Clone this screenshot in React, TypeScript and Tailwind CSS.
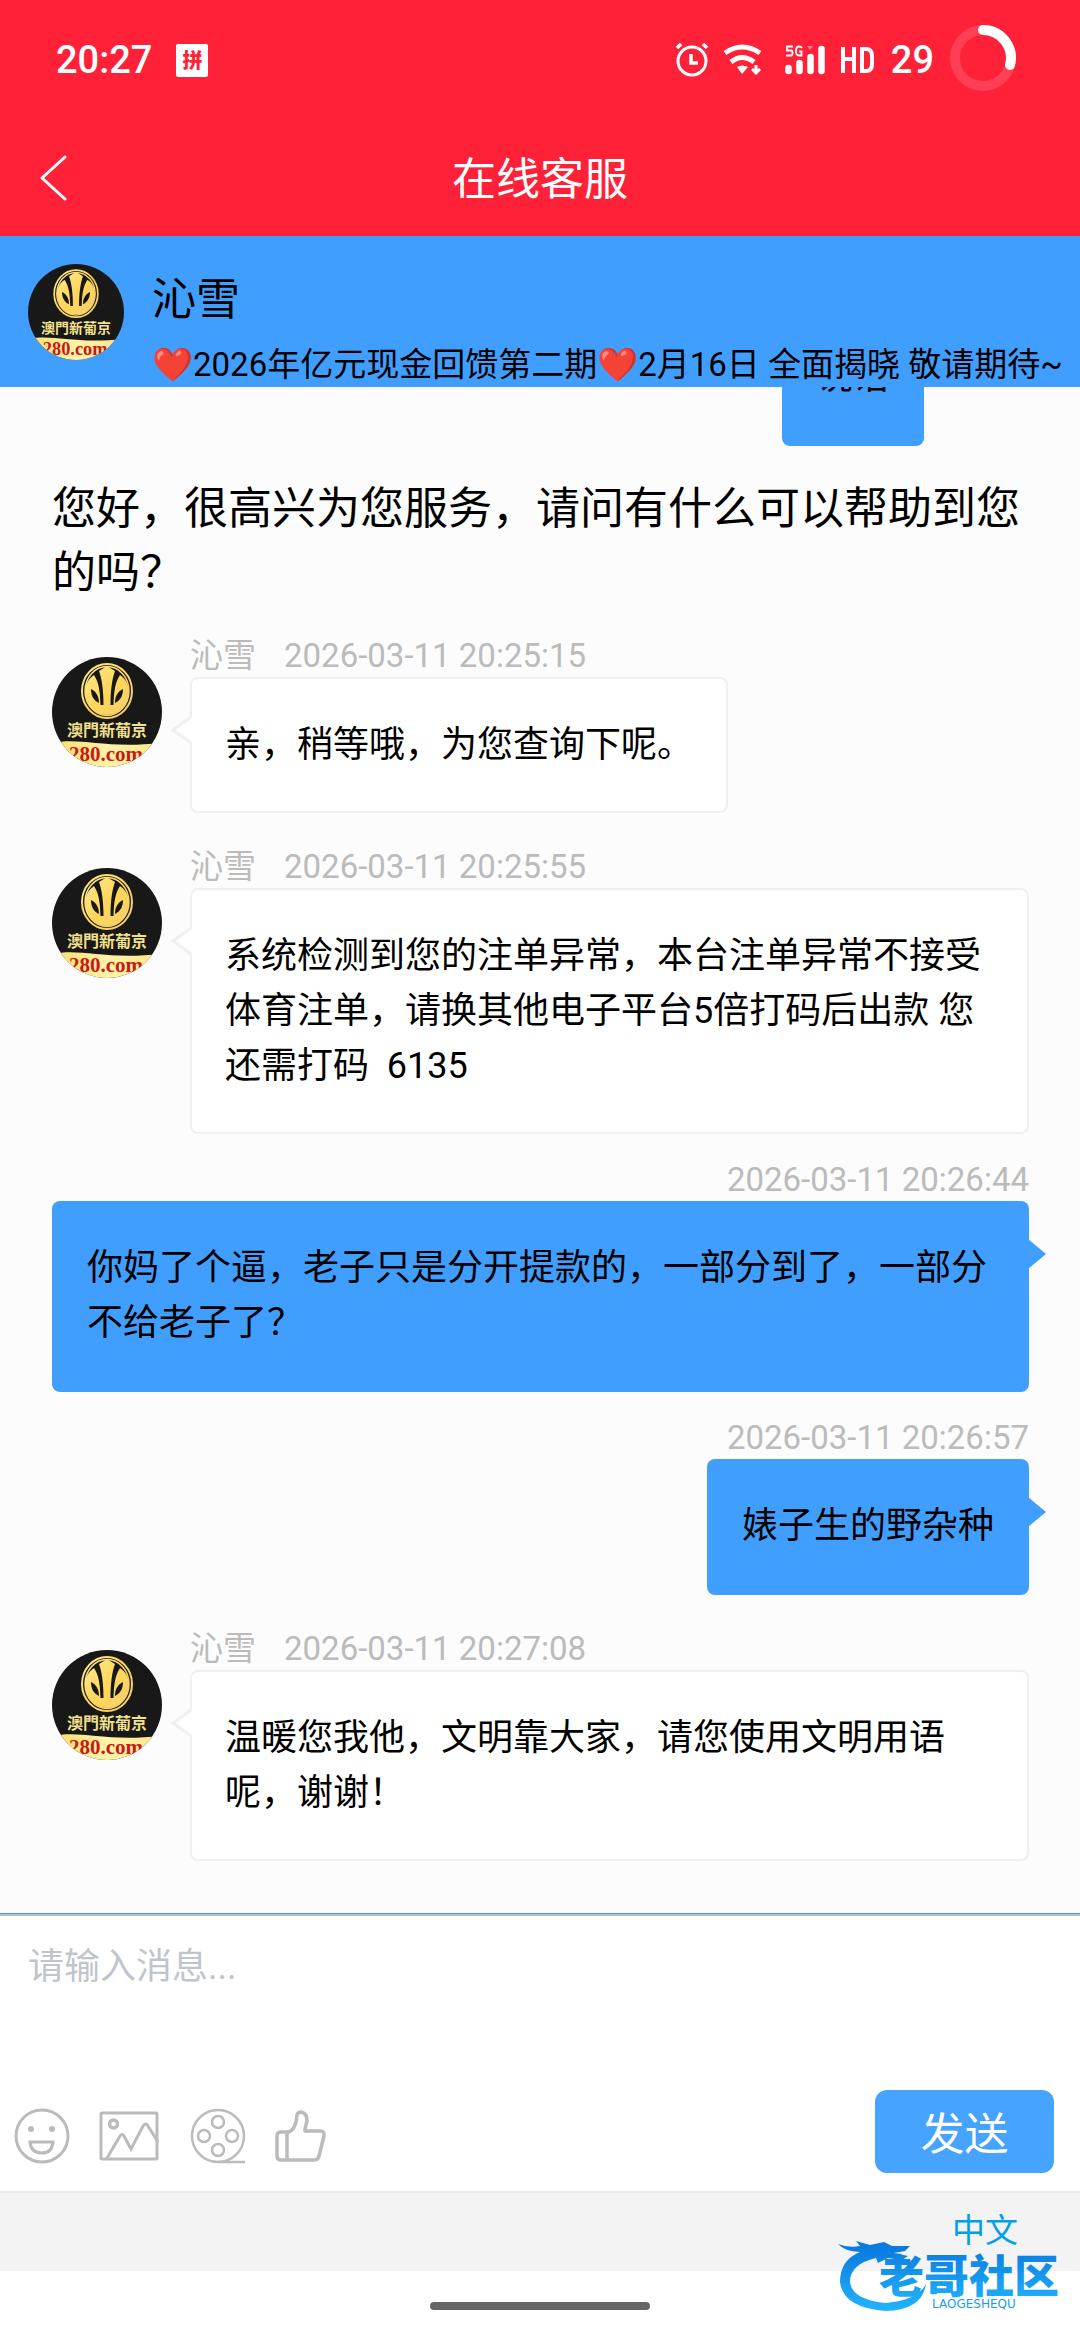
import { useState } from "react";

const FONT = "font-[Roboto,'Noto_Sans_CJK_SC',sans-serif]";

function AvatarArt({ id }: { id: string }) {
  return (
    <svg viewBox="0 0 110 110" className="block h-full w-full" role="img" aria-label="澳門新葡京">
      <defs>
        <clipPath id={`${id}-c`}>
          <circle cx="55" cy="55" r="55" />
        </clipPath>
        <linearGradient id={`${id}-g`} x1="0" y1="0" x2="1" y2="1">
          <stop offset="0" stopColor="#ffe98a" />
          <stop offset="0.55" stopColor="#ffd55a" />
          <stop offset="1" stopColor="#f3d070" />
        </linearGradient>
        <linearGradient id={`${id}-b`} x1="0" y1="0" x2="1" y2="0">
          <stop offset="0" stopColor="#ffdc6a" />
          <stop offset="0.5" stopColor="#fff3a8" />
          <stop offset="1" stopColor="#ffe488" />
        </linearGradient>
      </defs>
      <g clipPath={`url(#${id}-c)`}>
        <rect width="110" height="110" fill="#181818" />
        <ellipse cx="55" cy="34" rx="25" ry="27" fill="none" stroke={`url(#${id}-g)`} strokeWidth="2" />
        <ellipse cx="55" cy="34" rx="22" ry="24.500" fill="none" stroke={`url(#${id}-g)`} strokeWidth="1.500" />
        <path
          d="M42 18 C33 24 31 34 35 44 C39 54 47 58 55 58 C63 58 71 54 75 44 C79 34 77 24 68 18 C63 26 62 34 61.500 48 L58.500 48 C58.500 34 60 22 63 14 L55 9 L47 14 C50 22 51.500 34 51.500 48 L48.500 48 C48 34 47 26 42 18Z"
          fill={`url(#${id}-g)`}
        />
        <path d="M39 32 C45 35 47 40 47 46 C41 43 39 38 39 32Z M71 32 C65 35 63 40 63 46 C69 43 71 38 71 32Z" fill="#181818" />
        <text x="55" y="79" textAnchor="middle" fontSize="16" fontWeight="700" fill="#f3e08a" className="font-['Noto_Sans_CJK_TC',sans-serif]">
          澳門新葡京
        </text>
        <path d="M0 86 C30 80 50 92 110 86 V110 H0Z" fill={`url(#${id}-b)`} />
        <text x="54" y="104" textAnchor="middle" fontSize="21" fontWeight="700" fill="#c61a1a" className="font-['Liberation_Serif',serif]">
          280.com
        </text>
      </g>
    </svg>
  );
}

function StatusBar() {
  return (
    <div className="flex h-[120px] items-center justify-between pr-16 pl-14 text-white">
      <div className="flex items-center gap-6">
        <span className="text-[38px] leading-none font-medium">20:27</span>
        <span className="flex h-[33px] w-8 items-center justify-center rounded-[2px] bg-white font-['Noto_Sans_CJK_SC',sans-serif] text-[20px] leading-none font-black text-[#ff2138]">
          拼
        </span>
      </div>
      <div className="flex items-center">
        <svg viewBox="0 0 34 34" className="mr-3.5 h-[34px] w-[34px]" fill="none" stroke="white" strokeWidth="3">
          <circle cx="17" cy="18" r="14" />
          <path d="M16 11 V20 H23" strokeWidth="3.500" />
          <path d="M2 5 L6 1 M32 5 L28 1" strokeWidth="3.500" />
        </svg>
        <svg viewBox="0 0 40 32" className="mr-[22px] h-8 w-10" fill="none" stroke="white" strokeWidth="5">
          <path d="M2 9 Q19 -3 37 9" />
          <path d="M8 18 Q19 9 31 18" />
          <path d="M14 23 Q19 20 25 23 L19 30Z" fill="white" stroke="none" />
          <path d="M33 21 V29 M29 25 L33 29 L37 25" strokeWidth="3" />
        </svg>
        <svg viewBox="0 0 40 30" className="mr-4 h-[30px] w-10">
          <path d="M8 1.500 H2 V5.500 H6 Q7.500 5.500 7.500 8 Q7.500 10.500 6 10.500 H1 M17 3 Q16 1.500 14 1.500 Q11 1.500 11 6 Q11 10.500 14 10.500 H16.500 V6.500 H14" fill="none" stroke="white" strokeWidth="1.800" />
          <path d="M22 1 H28 L25 5Z" fill="white" opacity="0.4" />
          <path d="M3.500 23 V26 M14.500 18 V26 M25.500 12 V26 M36.500 4 V26" stroke="white" strokeWidth="6.500" strokeLinecap="round" />
        </svg>
        <svg viewBox="0 0 34 26" className="mr-4 h-[26px] w-[34px]" fill="none" stroke="white" strokeWidth="4">
          <path d="M2 0 V26 M13 0 V26 M2 12 H13 M21 2 V24 H25 Q31 24 31 17 V9 Q31 2 25 2Z" />
        </svg>
        <span className="text-[38px] leading-none font-medium">29</span>
        <svg viewBox="0 0 66 66" className="mb-1 ml-4 h-[66px] w-[66px]" fill="none" strokeWidth="10">
          <circle cx="33" cy="33" r="28" stroke="#ff3f54" />
          <path d="M33 5 A28 28 0 0 1 60 40" stroke="white" strokeLinecap="round" />
        </svg>
      </div>
    </div>
  );
}

type Message = {
  from: "agent" | "me";
  time: string;
  text: string;
};

const messages: Message[] = [
  { from: "agent", time: "2026-03-11 20:25:15", text: "亲，稍等哦，为您查询下呢。" },
  {
    from: "agent",
    time: "2026-03-11 20:25:55",
    text: "系统检测到您的注单异常，本台注单异常不接受体育注单，请换其他电子平台5倍打码后出款 您还需打码  6135",
  },
  {
    from: "me",
    time: "2026-03-11 20:26:44",
    text: "你妈了个逼，老子只是分开提款的，一部分到了，一部分不给老子了？",
  },
  { from: "me", time: "2026-03-11 20:26:57", text: "婊子生的野杂种" },
  { from: "agent", time: "2026-03-11 20:27:08", text: "温暖您我他，文明靠大家，请您使用文明用语呢，谢谢！" },
];

function AgentMessage({ message, id }: { message: Message; id: string }) {
  return (
    <li className="mt-[35px] flex items-start first:mt-8">
      <div className="mt-5 mr-7 h-[110px] w-[110px] shrink-0">
        <AvatarArt id={id} />
      </div>
      <div className="flex min-w-0 flex-1 flex-col items-start">
        <div className="flex h-10 gap-7 text-[33px] leading-[38px] text-[#bbbbbb]">
          <span>沁雪</span>
          <time>{message.time}</time>
        </div>
        <div className="relative rounded-lg border-2 border-[#f0f0f0] bg-white px-[33px] pt-[39px] pb-[38px] text-[36px] leading-[55px] whitespace-pre-wrap">
          <svg viewBox="0 0 24 30" className="absolute top-9 -left-[22px] h-[30px] w-6">
            <path d="M24 1 L3 15 L24 29Z" fill="white" />
            <path d="M21 2 L3 15 L21 28" fill="none" stroke="#f0f0f0" strokeWidth="3" />
          </svg>
          {message.text}
        </div>
      </div>
    </li>
  );
}

function MyMessage({ message }: { message: Message }) {
  return (
    <li className="mt-[27px] flex flex-col items-end">
      <time className="h-10 text-[33px] leading-[38px] text-[#bbbbbb]">{message.time}</time>
      <div className="relative rounded-lg bg-[#409eff] px-[35px] pt-10 pb-[41px] text-[36px] leading-[55px]">
        <svg viewBox="0 0 18 30" className="absolute top-[38px] -right-[17px] h-[30px] w-[18px]">
          <path d="M0 0 L18 15 L0 30Z" fill="#409eff" />
        </svg>
        {message.text}
      </div>
    </li>
  );
}

function Toolbar() {
  const button = "flex items-center justify-center text-[#bbbbbb]";
  return (
    <div className="flex items-center gap-[29px]">
      <button type="button" aria-label="表情" className={button}>
        <svg viewBox="0 0 56 56" className="h-14 w-14" fill="none" stroke="currentColor" strokeWidth="3">
          <circle cx="28" cy="28" r="26" />
          <circle cx="17" cy="21" r="3" fill="currentColor" stroke="none" />
          <circle cx="38" cy="21" r="3" fill="currentColor" stroke="none" />
          <path d="M16 34 H39 Q38 45 28 45 Q17 45 16 34Z" />
        </svg>
      </button>
      <button type="button" aria-label="图片" className={button}>
        <svg viewBox="0 0 60 50" className="h-[50px] w-[60px]" fill="none" stroke="currentColor" strokeWidth="3" strokeLinejoin="round">
          <rect x="2" y="2" width="56" height="46" rx="1" />
          <circle cx="14.500" cy="13" r="4" strokeWidth="3.500" />
          <path d="M8 47 L21 25 Q23 22 25 25 L32 38 L44 15 Q47 11 49 15 L59 31" strokeLinejoin="miter" />
        </svg>
      </button>
      <button type="button" aria-label="视频" className={button}>
        <svg viewBox="-2 0 58 56" className="h-14 w-[58px]" fill="none" stroke="currentColor" strokeWidth="2.500">
          <circle cx="28" cy="28" r="26" />
          <circle cx="28" cy="14" r="6" />
          <circle cx="14" cy="28" r="6" />
          <circle cx="42" cy="28" r="6" />
          <circle cx="28" cy="42" r="6" />
          <path d="M28 54 H55" />
        </svg>
      </button>
      <button type="button" aria-label="点赞" className={button}>
        <svg viewBox="0 0 52 54" className="h-[54px] w-[52px]" fill="none" stroke="currentColor" strokeWidth="3.500" strokeLinejoin="round">
          <path d="M12 23 H6 Q2 23 2 27 V47 Q2 51 6 51 H39 Q43 51 44 47 L49 27 Q50 22 45 22 H30 V20 L32 12 Q32 4 26 3 Q23 3 22 6 Q21 17 17 21 Q15 23 12 23 V51" />
        </svg>
      </button>
    </div>
  );
}

function Watermark() {
  return (
    <svg viewBox="0 0 230 80" className="pointer-events-none absolute right-4 bottom-7 h-20 w-[230px]">
      <defs>
        <linearGradient id="wm" x1="0" y1="0" x2="0" y2="1">
          <stop offset="0.1" stopColor="#0a7be0" />
          <stop offset="1" stopColor="#22b4fb" />
        </linearGradient>
      </defs>
      <path
        d="M4 12 Q14 16 26 14 L22 9 L36 13 L50 10 L58 14 L76 14 L71 19 L60 21 L74 24 L68 28 L54 26 L44 31 L42 26 Q16 32 16 50 Q18 68 52 71 Q84 68 92 52 Q88 78 52 79 Q9 76 6 50 Q6 28 26 20 Q10 19 4 12Z"
        fill="url(#wm)"
      />
      <text x="45" y="61" fontSize="45" fontWeight="900" fill="url(#wm)" className="font-['Noto_Sans_CJK_SC',sans-serif]">
        老哥社区
      </text>
      <text x="98" y="76" fontSize="12" fill="#1b9bee" className="font-['DejaVu_Sans',sans-serif]">
        LAOGESHEQU
      </text>
    </svg>
  );
}

export default function App() {
  const [draft, setDraft] = useState("");
  return (
    <div className={`flex min-h-screen flex-col bg-white text-black ${FONT}`}>
      <header className="bg-[#ff2138] text-white">
        <StatusBar />
        <div className="grid h-[116px] grid-cols-[1fr_auto_1fr] items-center">
          <button type="button" aria-label="返回" className="ml-10 w-fit">
            <svg viewBox="0 0 28 46" className="h-[46px] w-7" fill="none" stroke="white" strokeWidth="3" strokeLinecap="round" strokeLinejoin="round">
              <path d="M25 2 L2 23 L25 44" />
            </svg>
          </button>
          <h1 className="pt-1 text-[44px] leading-none">在线客服</h1>
        </div>
      </header>

      <section className="flex h-[151px] items-start gap-7 bg-[#409eff] pl-7">
        <div className="mt-7 h-24 w-24 shrink-0">
          <AvatarArt id="head" />
        </div>
        <div className="min-w-0 flex-1 overflow-hidden pt-8 whitespace-nowrap">
          <h2 className="text-[44px] leading-[64px]">沁雪</h2>
          <p className="mt-2.5 text-[33px] leading-[45px]">❤️2026年亿元现金回馈第二期❤️2月16日 全面揭晓 敬请期待~</p>
        </div>
      </section>

      <main className="flex-1 bg-[#fcfcfc] pr-[51px] pb-[52px] pl-[52px]">
        <div className="flex h-[59px] items-end justify-end overflow-hidden pr-[105px]">
          <div className="rounded-b-lg bg-[#409eff] px-[35px] pb-[41px] text-[36px] leading-[55px]">说话</div>
        </div>
        <p className="mt-[31px] text-[44px] leading-[64px]">您好，很高兴为您服务，请问有什么可以帮助到您的吗？</p>
        <ul>
          {messages.map((m, i) =>
            m.from === "agent" ? <AgentMessage key={i} id={`a${i}`} message={m} /> : <MyMessage key={i} message={m} />,
          )}
        </ul>
      </main>

      <footer>
        <div className="border-t border-[#409eff]">
          <div className="border-t-2 border-[#bbbbbb]">
            <textarea
              aria-label="请输入消息"
              placeholder="请输入消息..."
              value={draft}
              onChange={(e) => setDraft(e.target.value)}
              className="block h-[164px] w-full resize-none px-7 pt-6 text-[36px] leading-[55px] outline-none placeholder:text-[#c0c4cc]"
            />
          </div>
        </div>
        <div className="flex h-[111px] items-center justify-between pr-[26px] pl-3.5">
          <Toolbar />
          <button type="button" className="mb-2 h-[83px] w-[179px] rounded-xl bg-[#46a3ff] pt-1.5 text-[44px] leading-none text-white">
            发送
          </button>
        </div>
        <div className="flex h-20 items-center justify-end border-t-2 border-[#ebebeb] bg-[#f3f3f3] pr-[62px] pb-1">
          <button type="button" className="text-[33px] leading-none text-[#00a0e9]">
            中文
          </button>
        </div>
        <div className="relative flex h-[69px] items-center justify-center">
          <div className="h-2 w-[220px] rounded-full bg-[#666666]" />
          <Watermark />
        </div>
      </footer>
    </div>
  );
}
